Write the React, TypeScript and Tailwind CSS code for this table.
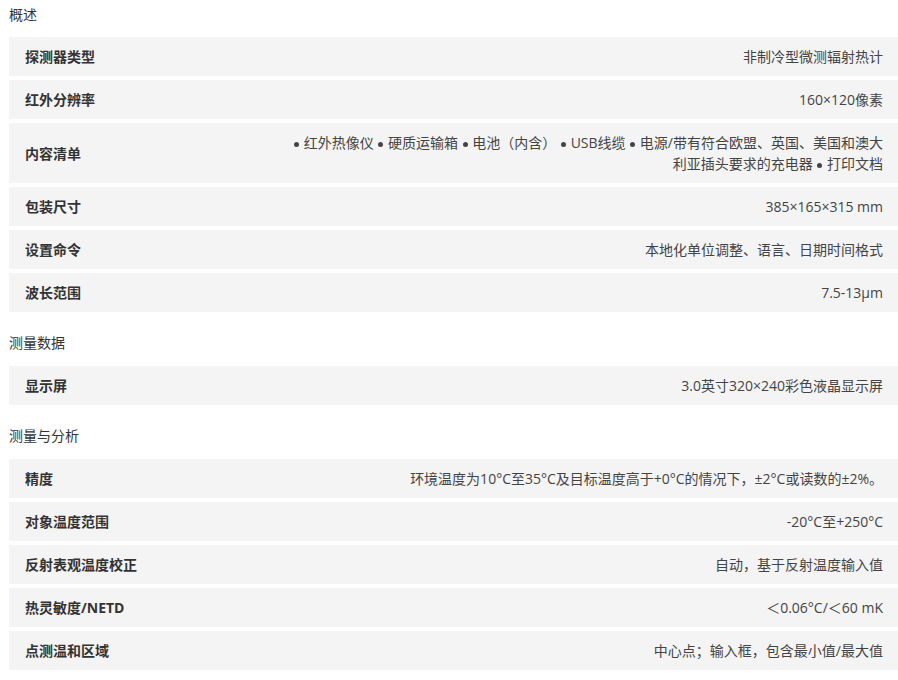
import React from 'react';

type Row = { label: string; value: React.ReactNode };

const Dot = () => <span className="mx-[1px] inline-block h-[5px] w-[5px] rounded-full bg-[#444] align-middle" />;

const contents = ['红外热像仪', '硬质运输箱', '电池（内含）', 'USB线缆', '电源/带有符合欧盟、英国、美国和澳大利亚插头要求的充电器', '打印文档'];

const sections: { title: string; rows: Row[] }[] = [
  {
    title: '概述',
    rows: [
      { label: '探测器类型', value: '非制冷型微测辐射热计' },
      { label: '红外分辨率', value: '160×120像素' },
      {
        label: '内容清单',
        value: contents.map((c, i) => (
          <React.Fragment key={c}>
            {i > 0 ? ' ' : ''}
            <Dot /> {c}
          </React.Fragment>
        )),
      },
      { label: '包装尺寸', value: '385×165×315 mm' },
      { label: '设置命令', value: '本地化单位调整、语言、日期时间格式' },
      { label: '波长范围', value: '7.5-13μm' },
    ],
  },
  {
    title: '测量数据',
    rows: [{ label: '显示屏', value: '3.0英寸320×240彩色液晶显示屏' }],
  },
  {
    title: '测量与分析',
    rows: [
      { label: '精度', value: '环境温度为10°C至35°C及目标温度高于+0°C的情况下，±2°C或读数的±2%。' },
      { label: '对象温度范围', value: '-20°C至+250°C' },
      { label: '反射表观温度校正', value: '自动，基于反射温度输入值' },
      { label: '热灵敏度/NETD', value: '＜0.06°C/＜60 mK' },
      { label: '点测温和区域', value: '中心点；输入框，包含最小值/最大值' },
    ],
  },
];

const SpecRow: React.FC<{ row: Row }> = ({ row }) => (
  <div className="flex items-center justify-between bg-[#f4f4f4] pl-4 pr-[15px] py-[9px]">
    <div className="shrink-0 font-bold text-[#333]">{row.label}</div>
    <div className="max-w-[590px] text-right text-[#444]">{row.value}</div>
  </div>
);

export default function App() {
  return (
    <div
      className="w-[898px] bg-white pl-[9px] pt-[5px] text-[14px] leading-[21px]"
      style={{ fontFamily: '"Open Sans", "Noto Sans CJK SC", sans-serif' }}
    >
      {sections.map((s, i) => (
        <div key={s.title} className={i > 0 ? 'mt-[21px]' : ''}>
          <div className={`${i > 0 ? 'mb-[13px]' : 'mb-[12px]'} leading-[20px] text-[#333]`}>{s.title}</div>
          <div className="flex flex-col gap-1">
            {s.rows.map((r) => (
              <SpecRow key={r.label} row={r} />
            ))}
          </div>
        </div>
      ))}
    </div>
  );
}
